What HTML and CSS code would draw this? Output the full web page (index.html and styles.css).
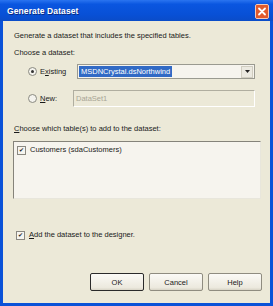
FILE: index.html
```html
<!DOCTYPE html>
<html>
<head>
<meta charset="utf-8">
<link rel="stylesheet" href="styles.css">
</head>
<body>
<div class="window">
  <div class="titlebar">
    <span class="title">Generate Dataset</span>
    <div class="close"><svg class="xicon" width="12" height="13" viewBox="0 0 12 13"><rect x="0" y="0" width="12" height="13" rx="1.5" fill="#e05a2c"/><path d="M3 3.5 L9 9.5 M9 3.5 L3 9.5" stroke="#ffffff" stroke-width="1.8" stroke-linecap="round"/></svg></div>
  </div>
  <div class="content">
    <div class="desc">Generate a dataset that includes the specified tables.</div>
    <div class="label choose">Choose a dataset:</div>
    <div class="row existing">
      <span class="radio checked"></span>
      <span class="rlabel">E<u>x</u>isting</span>
      <div class="combo">
        <span class="sel">MSDNCrystal.dsNorthwind</span>
        <span class="drop"><svg width="5" height="3" viewBox="0 0 5 3"><path d="M0 0 H5 L2.5 3 Z" fill="#222"/></svg></span>
      </div>
    </div>
    <div class="row new">
      <span class="radio"></span>
      <span class="rlabel"><u>N</u>ew:</span>
      <div class="textbox">DataSet1</div>
    </div>
    <div class="label which"><u>C</u>hoose which table(s) to add to the dataset:</div>
    <div class="listbox">
      <div class="item"><span class="check small">✔</span><span>Customers (sdaCustomers)</span></div>
    </div>
    <div class="addrow"><span class="check">✔</span><span><u>A</u>dd the dataset to the designer.</span></div>
    <div class="buttons">
      <button class="btn default">OK</button>
      <button class="btn">Cancel</button>
      <button class="btn">Help</button>
    </div>
  </div>
</div>
</body>
</html>
```
FILE: styles.css
```css
html, body {
  margin: 0;
  padding: 0;
  background: #ffffff;
}
.window {
  width: 273px;
  height: 306px;
  box-sizing: border-box;
  background: #0a52d8;
  padding: 0 3px 3px 3px;
  display: flex;
  flex-direction: column;
  font-family: "Liberation Sans", Arial, sans-serif;
  font-size: 7.5px;
  color: #1a1a1a;
}
.titlebar {
  height: 21px;
  margin: 0 -3px;
  padding: 0 4px 0 7px;
  display: flex;
  align-items: center;
  justify-content: space-between;
  background: linear-gradient(#2a74f0 0%, #0a56e0 20%, #0850d6 70%, #0a4cc8 100%);
}
.title {
  color: #fff;
  font-weight: bold;
  font-size: 8.5px;
  letter-spacing: 0.1px;
  text-shadow: 1px 1px 0 #0a2a80;
}
.close {
  width: 14px;
  height: 15px;
  box-sizing: border-box;
  border: 1px solid #f6c8b4;
  border-radius: 2px;
  background-color: #e05a2c;
  margin-top: 2px;
}
.xicon {
  display: block;
}
.content {
  flex: 1;
  background: #ece9d8;
  padding: 10px 8px 0 10px;
  display: flex;
  flex-direction: column;
}
.desc, .label {
  line-height: 10px;
  height: 10px;
  white-space: nowrap;
  margin-left: 1px;
}
.choose { margin-top: 7px; }
.row {
  display: flex;
  align-items: center;
  margin-left: 15px;
}
.existing { margin-top: 6px; height: 15px; }
.new { margin-top: 11px; height: 17px; }
.radio {
  width: 7px;
  height: 7px;
  border-radius: 50%;
  border: 1px solid #8a8a80;
  background: #f4f3ee;
  display: flex;
  align-items: center;
  justify-content: center;
  flex: none;
}
.radio.checked::after {
  content: "";
  width: 3px;
  height: 3px;
  border-radius: 50%;
  background: #333;
}
.rlabel {
  margin-left: 3px;
  width: 37px;
  flex: none;
}
.new .rlabel { width: 33px; }
.combo {
  width: 178px;
  height: 15px;
  box-sizing: border-box;
  border: 1px solid #9a9a90;
  background: #f6f4ee;
  display: flex;
  align-items: center;
  justify-content: space-between;
  padding: 0 1px 0 1px;
}
.sel {
  background: #316ac5;
  color: #fff;
  line-height: 11px;
  padding: 0 2px;
}
.drop {
  width: 12px;
  height: 12px;
  box-sizing: border-box;
  border: 1px solid #d0cdc0;
  background-color: #ebe9e0;
  display: flex;
  align-items: center;
  justify-content: center;
}
.drop svg { display: block; }
.textbox {
  width: 182px;
  height: 17px;
  box-sizing: border-box;
  border: 1px solid #b0aea0;
  border-bottom-color: #fff;
  border-right-color: #fff;
  background: #ece9d8;
  color: #a8a595;
  line-height: 15px;
  padding-left: 2px;
}
.which { margin-top: 17px; }
.listbox {
  margin-top: 7px;
  margin-left: 0px;
  width: 248px;
  height: 58px;
  box-sizing: border-box;
  border: 1px solid #85837a;
  border-right-color: #e8e6dc;
  border-bottom-color: #e8e6dc;
  background: #f6f4ee;
  padding: 3px 3px;
}
.item {
  display: flex;
  align-items: center;
  line-height: 10px;
}
.check {
  width: 7px;
  height: 7px;
  border: 1px solid #8a8880;
  background: #f6f5f0;
  font-size: 6px;
  line-height: 7px;
  text-align: center;
  color: #222;
  margin-right: 4px;
  flex: none;
}
.addrow {
  margin-top: 31px;
  margin-left: 3px;
  display: flex;
  align-items: center;
  line-height: 10px;
}
.buttons {
  margin-top: 33px;
  display: flex;
  justify-content: flex-end;
  gap: 5px;
}
.btn {
  width: 54px;
  height: 18px;
  box-sizing: border-box;
  border: 1px solid #8f8c80;
  border-radius: 2px;
  background: linear-gradient(#fbfaf6, #ece9de 85%, #d8d4c6);
  font-family: "Liberation Sans", Arial, sans-serif;
  font-size: 7.5px;
  color: #1a1a1a;
  padding: 0;
}
.btn.default {
  border-color: #2a2a2a;
}
```
